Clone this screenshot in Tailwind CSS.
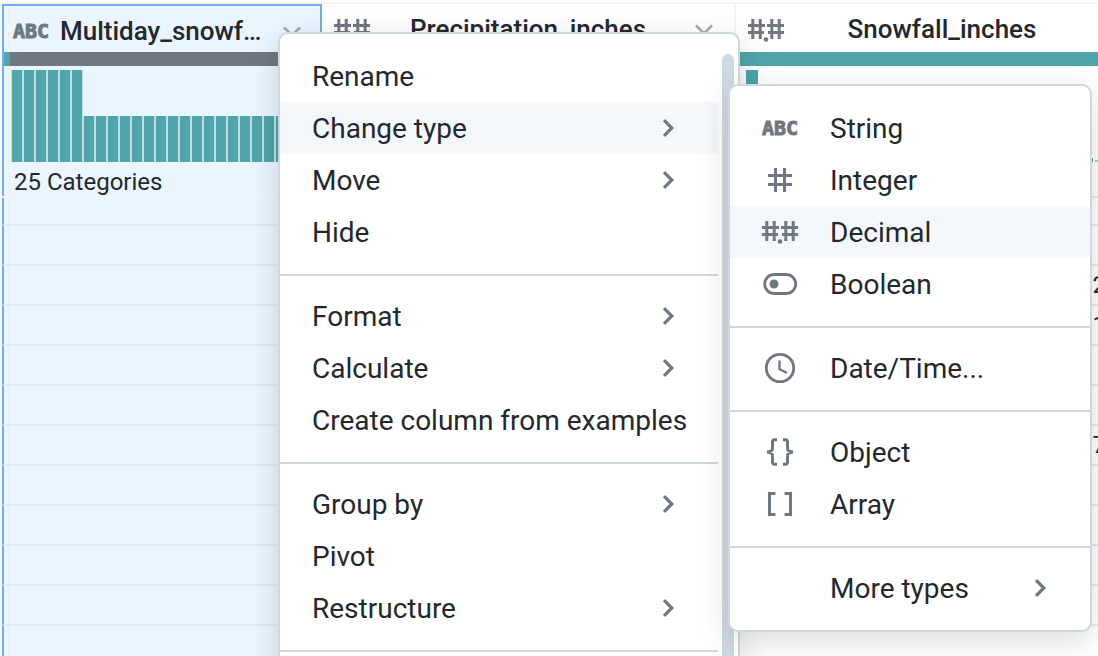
<!DOCTYPE html>
<html lang="en">
<head>
<meta charset="utf-8">
<title>Column type menu</title>
<script src="https://cdn.jsdelivr.net/npm/@tailwindcss/browser@4"></script>
</head>
<body class="bg-white font-[Roboto,sans-serif] text-[#23282e]">
<svg class="hidden" aria-hidden="true">
  <symbol id="chevron-right" viewBox="0 0 14 20"><path d="M3 2.200 L10.800 10 L3 17.800" fill="none" stroke="currentColor" stroke-width="3.200"/></symbol>
  <symbol id="chevron-down" viewBox="0 0 20 14"><path d="M2 3.500 L10 11.500 L18 3.500" fill="none" stroke="currentColor" stroke-width="2.600"/></symbol>
  <symbol id="integer" viewBox="0 0 24 24"><path d="M7.500 0V24M16.500 0V24M0 7.500H24M0 16.500H24" fill="none" stroke="currentColor" stroke-width="3"/></symbol>
  <symbol id="decimal" viewBox="0 -1 36 24"><path d="M4.800 0V20M12.200 0V20M23.800 0V20M31.200 0V20M0 6.500H17M19 6.500H36M0 13.500H16M20 13.500H36" fill="none" stroke="currentColor" stroke-width="3"/><circle cx="18" cy="20.500" r="2.300" fill="currentColor"/></symbol>
</svg>

<main class="relative h-screen overflow-hidden pt-[2px] pl-[2px]">
  <table class="w-[1148px] table-fixed border-separate border-spacing-0 text-left">
    <colgroup><col class="w-[320px]"><col class="w-[414px]"><col class="w-[414px]"></colgroup>
    <thead>
      <tr class="align-top">
        <th class="border-t-2 border-[#f4f4f5] p-0 font-normal" scope="col">
          <div class="h-[192px] border-x-2 border-t-2 border-[#6caefa] bg-[#eaf5ff]">
            <div class="flex h-[46px] items-center pt-1 pr-[18px] pl-[9px]">
              <span class="w-[47px] font-['DejaVu_Sans_Mono',monospace] text-[20px] font-bold text-[#6f7882] [-webkit-text-stroke:1px_#6f7882]">ABC</span>
              <span class="flex-1 text-[26px] font-medium">Multiday_snowf…</span>
              <button type="button" aria-label="Column menu" class="text-[#a3adb8]"><svg class="h-[14px] w-5"><use href="#chevron-down"/></svg></button>
            </div>
            <div class="flex h-[14px] bg-[#6f7780]"><div class="w-[6px] bg-[#4fa5a9]"></div></div>
            <div class="mt-1 ml-2 flex h-[92px] items-end gap-[2px]" id="histogram"></div>
            <div class="pt-1 pl-[10px] text-[24px] leading-8">25 Categories</div>
          </div>
          <div class="h-[2px] bg-[#f4f5f6]"></div>
        </th>
        <th class="border-t-2 border-r-2 border-[#f4f4f5] p-0 font-normal" scope="col">
          <div class="flex h-12 items-center pt-[2px] pr-[20px] pl-3">
            <svg class="mt-[2px] h-6 w-9 text-[#6f7882]"><use href="#decimal"/></svg>
            <span class="flex-1 pr-2 text-center text-[26px] font-medium">Precipitation_inches</span>
            <button type="button" aria-label="Column menu" class="text-[#a3adb8]"><svg class="h-[14px] w-5"><use href="#chevron-down"/></svg></button>
          </div>
        </th>
        <th class="border-t-2 border-[#f4f4f5] p-0 font-normal" scope="col">
          <div class="flex h-12 items-center pt-[2px] pr-[50px] pl-3">
            <svg class="mt-[2px] h-6 w-9 text-[#6f7882]"><use href="#decimal"/></svg>
            <span class="flex-1 text-center text-[26px] font-medium">Snowfall_inches</span>
          </div>
          <div class="h-[14px] bg-[#4fa5a9]"></div>
          <div class="mt-1 flex h-[92px] items-end pl-[10px]">
            <div class="h-full w-3 bg-[#4fa5a9]"></div>
            <div class="ml-[324px] h-1 w-[11px] bg-[#4fa5a9]"></div>
            <div class="ml-[2px] h-[2px] w-[10px] bg-[#4fa5a9]/50"></div>
          </div>
          <div class="h-9 border-b-2 border-[#ebebed]"></div>
        </th>
      </tr>
    </thead>
    <tbody id="rows"></tbody>
  </table>

  <div role="menu" aria-label="Column actions" class="absolute top-8 -bottom-8 left-[278px] flex w-[462px] gap-1 rounded-[10px] border-2 border-[#cfd8e2] bg-white pr-1 text-[28px] leading-[43px] shadow-[0_8px_32px_rgba(0,0,0,0.14)]">
    <div class="flex-1 divide-y-2 divide-[#cfd8e2] pt-[2px] *:pt-[14px] *:pb-4">
      <div>
        <button type="button" role="menuitem" class="flex h-13 w-full items-center pl-8 text-left">Rename</button>
        <button type="button" role="menuitem" class="flex h-13 w-full items-center justify-between bg-[#f4f8fd] pr-[43px] pl-8 text-left">Change type<svg class="h-5 w-[14px] text-[#6f7882]"><use href="#chevron-right"/></svg></button>
        <button type="button" role="menuitem" class="flex h-13 w-full items-center justify-between pr-[43px] pl-8 text-left">Move<svg class="h-5 w-[14px] text-[#6f7882]"><use href="#chevron-right"/></svg></button>
        <button type="button" role="menuitem" class="flex h-13 w-full items-center pl-8 text-left">Hide</button>
      </div>
      <div>
        <button type="button" role="menuitem" class="flex h-13 w-full items-center justify-between pr-[43px] pl-8 text-left">Format<svg class="h-5 w-[14px] text-[#6f7882]"><use href="#chevron-right"/></svg></button>
        <button type="button" role="menuitem" class="flex h-13 w-full items-center justify-between pr-[43px] pl-8 text-left">Calculate<svg class="h-5 w-[14px] text-[#6f7882]"><use href="#chevron-right"/></svg></button>
        <button type="button" role="menuitem" class="flex h-13 w-full items-center pl-8 text-left whitespace-nowrap">Create column from examples</button>
      </div>
      <div>
        <button type="button" role="menuitem" class="flex h-13 w-full items-center justify-between pr-[43px] pl-8 text-left">Group by<svg class="h-5 w-[14px] text-[#6f7882]"><use href="#chevron-right"/></svg></button>
        <button type="button" role="menuitem" class="flex h-13 w-full items-center pl-8 text-left">Pivot</button>
        <button type="button" role="menuitem" class="flex h-13 w-full items-center justify-between pr-[43px] pl-8 text-left">Restructure<svg class="h-5 w-[14px] text-[#6f7882]"><use href="#chevron-right"/></svg></button>
      </div>
      <div></div>
    </div>
    <div class="mt-5 w-3 rounded-t-full bg-[#d0d8e1]"></div>
  </div>

  <div role="menu" aria-label="Change type" class="absolute top-[84px] left-[728px] w-[364px] divide-y-2 divide-[#cfd8e2] rounded-[10px] border-2 border-[#cfd8e2] bg-white pt-[2px] text-[28px] leading-[43px] shadow-[0_8px_32px_rgba(0,0,0,0.14)] *:pt-[14px] *:pb-4">
    <div>
      <button type="button" role="menuitem" class="flex h-13 w-full items-center pl-8 text-left"><span class="w-[68px] font-['DejaVu_Sans_Mono',monospace] text-[20px] font-bold text-[#6f7882] [-webkit-text-stroke:1px_#6f7882]">ABC</span>String</button>
      <button type="button" role="menuitem" class="flex h-13 w-full items-center pl-8 text-left"><span class="w-[68px] pl-[6px] text-[#6f7882]"><svg class="size-6"><use href="#integer"/></svg></span>Integer</button>
      <button type="button" role="menuitem" class="flex h-13 w-full items-center bg-[#f4f8fd] pl-8 text-left"><span class="w-[68px] text-[#6f7882]"><svg class="h-6 w-9"><use href="#decimal"/></svg></span>Decimal</button>
      <button type="button" role="menuitem" class="flex h-13 w-full items-center pl-8 text-left"><span class="w-[68px] text-[#6f7882]"><svg class="h-6 w-9" viewBox="0 0 36 24"><rect x="2.700" y="2.500" width="31" height="19" rx="9.500" fill="none" stroke="currentColor" stroke-width="2.800"/><circle cx="12" cy="12" r="4.500" fill="currentColor"/></svg></span>Boolean</button>
    </div>
    <div>
      <button type="button" role="menuitem" class="flex h-13 w-full items-center pl-8 text-left"><span class="w-[68px] pl-[2px] text-[#6f7882]"><svg class="size-8" viewBox="0 0 32 32" fill="none" stroke="currentColor"><circle cx="16" cy="16" r="13.700" stroke-width="2.800"/><path d="M15.500 8.500V17L23 21" stroke-width="2.300"/></svg></span>Date/Time...</button>
    </div>
    <div>
      <button type="button" role="menuitem" class="flex h-13 w-full items-center pl-8 text-left"><span class="w-[68px] pl-1 text-[#6f7882]"><svg class="h-8 w-7" viewBox="0 0 28 32" fill="none" stroke="currentColor" stroke-width="3"><path d="M11 3.800H8.500Q6.500 3.800 6.500 6V12.500Q6.500 15.500 1 16Q6.500 16.500 6.500 19.500V26Q6.500 28.200 8.500 28.200H11M17 3.800H19.500Q21.500 3.800 21.500 6V12.500Q21.500 15.500 27 16Q21.500 16.500 21.500 19.500V26Q21.500 28.200 19.500 28.200H17"/></svg></span>Object</button>
      <button type="button" role="menuitem" class="flex h-13 w-full items-center pl-8 text-left"><span class="w-[68px] pl-[6px] text-[#6f7882]"><svg class="size-6" viewBox="0 0 24 24" fill="none" stroke="currentColor" stroke-width="3"><path d="M7.500 1.500H1.500V22.500H7.500M16.500 1.500H22.500V22.500H16.500"/></svg></span>Array</button>
    </div>
    <div>
      <button type="button" role="menuitem" class="flex h-13 w-full items-center justify-between pr-[43px] pl-[100px] text-left">More types<svg class="h-5 w-[14px] text-[#6f7882]"><use href="#chevron-right"/></svg></button>
    </div>
  </div>
</main>
<script>
  // Category counts: six values occur twice, the rest once.
  document.getElementById('histogram').innerHTML = Array.from({ length: 25 }, (_, i) =>
    `<div class="w-[10px] bg-[#4fa5a9] shadow-[1px_0_0_#c0dfe5,-1px_0_0_#c0dfe5] ${i < 6 ? 'h-full' : 'h-1/2'}"></div>`).join('');

  const snowfall = ['', '', '2', '1', '', '', '7', '', '', '', '', ''];
  document.getElementById('rows').innerHTML = snowfall.map((v, i) =>
    `<tr class="${i ? 'h-10' : 'h-7'}">
      <td class="border-b-2 border-l-2 border-b-[#e2ebf3] border-l-[#6caefa] bg-[#eaf5ff] p-0"></td>
      <td class="border-r-2 border-b-2 border-[#ebebed] p-0"></td>
      <td class="border-b-2 border-[#ebebed] pr-[44px] py-0 text-right text-[24px] leading-none">${v}</td>
    </tr>`).join('');
</script>
</body>
</html>
